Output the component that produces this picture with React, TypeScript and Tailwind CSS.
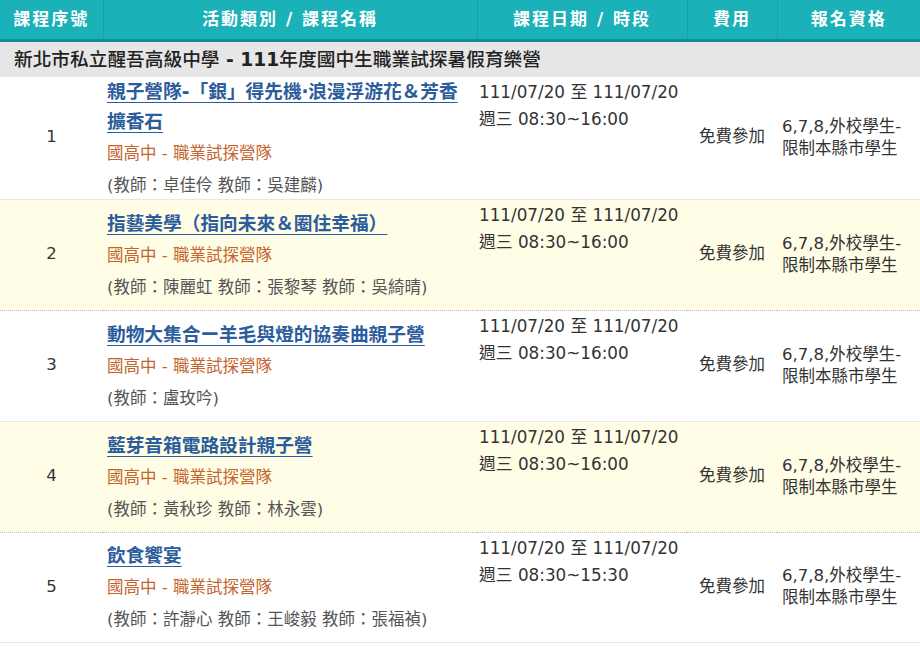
import React from "react";

type Row = {
  no: number;
  title: React.ReactNode;
  lines: number;
  teachers: string;
  time: string;
  bg: string;
  border: string;
  h: string;
};

const rows: Row[] = [
  {
    no: 1,
    title: (
      <>
        親子營隊-「銀」得先機‧浪漫浮游花＆芳香
        <br />
        擴香石
      </>
    ),
    lines: 2,
    teachers: "(教師：卓佳伶 教師：吳建麟)",
    time: "週三 08:30~16:00",
    bg: "bg-white",
    border: "border-b border-solid border-[#e6e6e6]",
    h: "h-[122px]",
  },
  {
    no: 2,
    title: "指藝美學（指向未來＆圈住幸福）",
    lines: 1,
    teachers: "(教師：陳麗虹 教師：張黎琴 教師：吳綺晴)",
    time: "週三 08:30~16:00",
    bg: "bg-[#fffde6]",
    border: "border-b border-dotted border-[#bdbdbd]",
    h: "h-[111px]",
  },
  {
    no: 3,
    title: "動物大集合ー羊毛與燈的協奏曲親子營",
    lines: 1,
    teachers: "(教師：盧玫吟)",
    time: "週三 08:30~16:00",
    bg: "bg-white",
    border: "border-b border-solid border-[#e6e6e6]",
    h: "h-[111px]",
  },
  {
    no: 4,
    title: "藍芽音箱電路設計親子營",
    lines: 1,
    teachers: "(教師：黃秋珍 教師：林永雲)",
    time: "週三 08:30~16:00",
    bg: "bg-[#fffde6]",
    border: "border-b border-dotted border-[#bdbdbd]",
    h: "h-[111px]",
  },
  {
    no: 5,
    title: "飲食饗宴",
    lines: 1,
    teachers: "(教師：許瀞心 教師：王峻毅 教師：張福禎)",
    time: "週三 08:30~15:30",
    bg: "bg-white",
    border: "border-b border-solid border-[#e6e6e6]",
    h: "h-[110px]",
  },
];

export default function App() {
  return (
    <div
      className="w-[920px] h-[646px] bg-white overflow-hidden text-[#333]"
      style={{ fontFamily: '"DejaVu Sans", "Noto Sans CJK TC", sans-serif' }}
    >
      <table className="w-[920px] table-fixed border-collapse">
        <colgroup>
          <col className="w-[103px]" />
          <col className="w-[374px]" />
          <col className="w-[210px]" />
          <col className="w-[90px]" />
          <col className="w-[143px]" />
        </colgroup>
        <thead>
          <tr className="bg-[#1bb1b9] text-white text-[17px] font-bold tracking-[2px]">
            <th className="h-[40px] p-0 border-r border-b-[3px] border-r-[#17a0a7] border-b-[#138d93] font-bold">
              <div className="h-[37px] leading-[37px] overflow-hidden">課程序號</div>
            </th>
            <th className="h-[40px] p-0 border-r border-b-[3px] border-r-[#17a0a7] border-b-[#138d93] font-bold">
              <div className="h-[37px] leading-[37px] overflow-hidden">活動類別 / 課程名稱</div>
            </th>
            <th className="h-[40px] p-0 border-r border-b-[3px] border-r-[#17a0a7] border-b-[#138d93] font-bold">
              <div className="h-[37px] leading-[37px] overflow-hidden">課程日期 / 時段</div>
            </th>
            <th className="h-[40px] p-0 border-r border-b-[3px] border-r-[#17a0a7] border-b-[#138d93] font-bold">
              <div className="h-[37px] leading-[37px] overflow-hidden">費用</div>
            </th>
            <th className="h-[40px] p-0 border-b-[3px] border-b-[#138d93] font-bold">
              <div className="h-[37px] leading-[37px] overflow-hidden">報名資格</div>
            </th>
          </tr>
        </thead>
        <tbody>
          <tr className="bg-[#e6e6e6]">
            <td colSpan={5} className="p-0 pl-[14px] text-[18.7px] text-[#222] font-medium">
              <div className="h-[35px] leading-[35px] overflow-hidden">
                新北市私立醒吾高級中學<span className="font-bold"> - 111</span>年度國中生職業試探暑假育樂營
              </div>
            </td>
          </tr>
          {rows.map((r) => (
            <tr key={r.no} className={`${r.bg} ${r.border}`}>
              <td className={`${r.h} p-0 text-center align-middle text-[16.5px]`}>{r.no}</td>
              <td className="p-0 align-middle pl-[4px]">
                <div
                  className={`${r.lines === 2 ? "h-[60px]" : "h-[30px]"} leading-[30px] text-[18.7px] font-bold text-[#2b5c9c] underline underline-offset-[4px] decoration-1 overflow-visible`}
                >
                  {r.title}
                </div>
                <div className="h-[34px] leading-[34px] text-[16.5px] text-[#c2642c]">國高中 - 職業試探營隊</div>
                <div className="h-[28px] leading-[30px] text-[16.5px] text-[#555]">{r.teachers}</div>
              </td>
              <td className="p-0 align-top pl-[2px] pt-[2px] text-[16.8px] text-[#333]">
                <div className="h-[27px] leading-[27px]">111/07/20 至 111/07/20</div>
                <div className="h-[27px] leading-[27px]">{r.time}</div>
              </td>
              <td className="p-0 text-center align-middle text-[16.5px] text-[#333]">免費參加</td>
              <td className="p-0 align-middle pl-[5px] text-[16.5px] text-[#333]">
                <div className="h-[22px] leading-[22px]">6,7,8,外校學生-</div>
                <div className="h-[22px] leading-[22px]">限制本縣市學生</div>
              </td>
            </tr>
          ))}
        </tbody>
      </table>
    </div>
  );
}
